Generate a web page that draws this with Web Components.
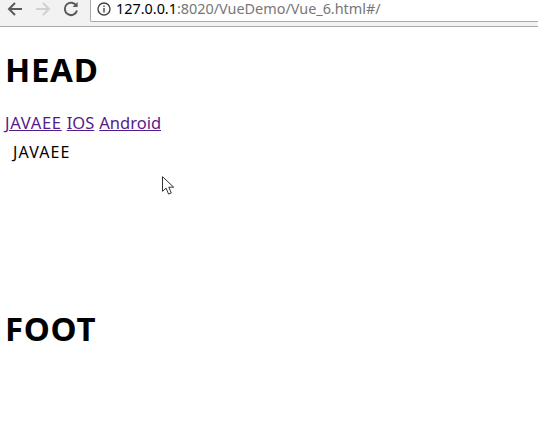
<!DOCTYPE html>
<html>
<head>
<meta charset="utf-8">
<title>Vue_6</title>
<style>
  html, body { margin: 0; height: 100%; background: #fff; overflow: hidden; }
  body { font-family: "Noto Sans", "Open Sans", sans-serif; color: #000; position: relative; }
</style>
</head>
<body>
<browser-bar url-host="127.0.0.1" url-rest=":8020/VueDemo/Vue_6.html#/"></browser-bar>
<page-heading style="--top: 21px">HEAD</page-heading>
<nav-links></nav-links>
<route-view>JAVAEE</route-view>
<page-heading style="--top: 57px">FOOT</page-heading>
<mouse-pointer></mouse-pointer>

<script>
const barTemplate = document.createElement("template");
barTemplate.innerHTML = `
  <style>
    :host {
      display: flex;
      height: 27px;
      box-sizing: border-box;
      background: #f2f2f2;
      border-bottom: 1px solid #a9a9a9;
      padding-left: 6px;
    }
    .btns { display: flex; gap: 10px; width: 84px; height: 17px; align-items: center; }
    svg { width: 18px; height: 18px; fill: none; stroke-width: 2; }
    .url {
      flex: 1;
      height: 22px;
      box-sizing: border-box;
      background: #fff;
      border: 1px solid #a9a9a9;
      border-top: 0;
      border-right: 0;
      border-bottom-left-radius: 2px;
      display: flex;
      align-items: center;
      padding: 0 0 4px 6px;
      gap: 5px;
      font: 14.4px/16px "Noto Sans", sans-serif;
      color: #000;
    }
    .rest { color: #777; }
  </style>
  <div class="btns">
    <svg viewBox="0 0 18 18" stroke="#5a5a5a"><path d="M16 9H3M9 3 3 9l6 6"/></svg>
    <svg viewBox="0 0 18 18" stroke="#d0d0d0"><path d="M2 9h13M9 3l6 6-6 6"/></svg>
    <svg viewBox="0 0 18 18" stroke="#5a5a5a"><path d="M14.5 6A6.2 6.2 0 1 0 15 10.5"/><path d="M15.6 2v5h-5" fill="#5a5a5a" stroke="none"/></svg>
  </div>
  <div class="url">
    <svg viewBox="0 0 14 14" stroke="#444" style="width:14px;height:14px;stroke-width:1.4"><circle cx="7" cy="7" r="6"/><path d="M7 6v4.4M7 3.4v1.6"/></svg>
    <span><span class="host"></span><span class="rest"></span></span>
  </div>
`;

class BrowserBar extends HTMLElement {
  constructor() {
    super();
    const shadowRoot = this.attachShadow({ mode: "open" });
    shadowRoot.appendChild(barTemplate.content.cloneNode(true));
  }

  connectedCallback() {
    this.shadowRoot.querySelector(".host").textContent = this.getAttribute("url-host");
    this.shadowRoot.querySelector(".rest").textContent = this.getAttribute("url-rest");
  }
}

class PageHeading extends HTMLElement {
  constructor() {
    super();
    this.attachShadow({ mode: "open" }).innerHTML = `
      <style>
        :host { display: block; margin-top: var(--top); padding-left: 5px; }
        h1 { margin: 0; font-size: 33px; letter-spacing: .7px; line-height: 44px; font-weight: 700; }
      </style>
      <h1><slot></slot></h1>
    `;
  }
}

class NavLinks extends HTMLElement {
  constructor() {
    super();
    this.attachShadow({ mode: "open" }).innerHTML = `
      <style>
        :host { display: flex; gap: 5px; margin-top: 19px; padding-left: 5px; font-size: 16.5px; line-height: 24px; }
        a { color: #551a8b; text-decoration: underline; }
        a.wide { letter-spacing: .7px; }
      </style>
      <a class="wide" href="#/javaee">JAVAEE</a>
      <a href="#/ios">IOS</a>
      <a href="#/android">Android</a>
    `;
  }
}

class RouteView extends HTMLElement {
  constructor() {
    super();
    this.attachShadow({ mode: "open" }).innerHTML = `
      <style>
        :host { display: block; margin-top: 5px; padding-left: 13px; font-size: 16px; letter-spacing: 1.1px; line-height: 24px; height: 110px; }
      </style>
      <slot></slot>
    `;
  }
}

class MousePointer extends HTMLElement {
  constructor() {
    super();
    this.attachShadow({ mode: "open" }).innerHTML = `
      <style>
        :host { position: absolute; left: 162px; top: 176px; width: 14px; height: 20px; }
        svg { display: block; }
      </style>
      <svg width="14" height="20" viewBox="0 0 14 20"><path d="M.5.7v14.6l3.6-3.2 2.5 6 2.7-1.1-2.5-5.8h4.9z" fill="#fff" stroke="#333" stroke-width="1"/></svg>
    `;
  }
}

customElements.define("browser-bar", BrowserBar);
customElements.define("page-heading", PageHeading);
customElements.define("nav-links", NavLinks);
customElements.define("route-view", RouteView);
customElements.define("mouse-pointer", MousePointer);
</script>
</body>
</html>
